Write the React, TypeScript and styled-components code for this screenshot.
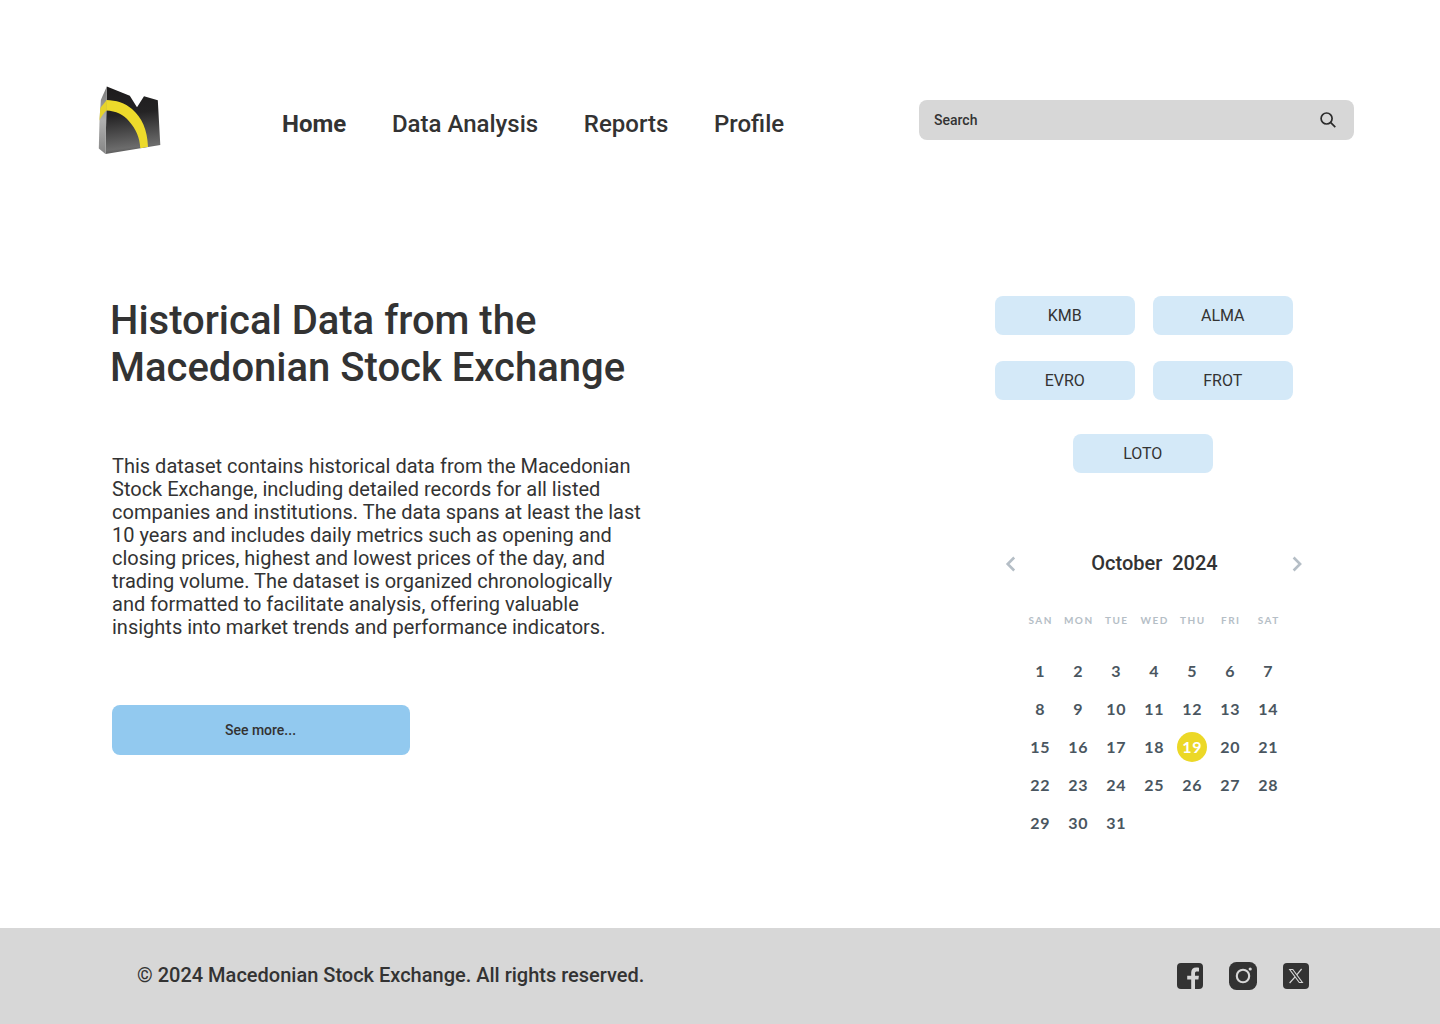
import React from "react";
import styled, { createGlobalStyle } from "styled-components";

const Global = createGlobalStyle`
  *, *::before, *::after { box-sizing: border-box; }
  body { margin: 0; background: #fff; color: #333; font-family: Roboto, "Liberation Sans", sans-serif; }
  h1, h2, p { margin: 0; }
  button { font: inherit; color: inherit; border: 0; padding: 0; cursor: pointer; }
`;

const Page = styled.div`
  width: 1440px;
  height: 1024px;
  display: flex;
  flex-direction: column;
  background: #fff;
`;

const Header = styled.header`
  height: 240px;
  padding: 82px 86px 0 94px;
  display: flex;
  align-items: flex-start;
`;

const Nav = styled.nav`
  display: flex;
  gap: 45.7px;
  margin: 28px 0 0 116px;
`;

const NavLink = styled.a<{ $active?: boolean }>`
  font-size: 24px;
  line-height: 28px;
  font-weight: ${(p) => (p.$active ? 700 : 500)};
  white-space: nowrap;
`;

const SearchBox = styled.label`
  width: 435px;
  height: 40px;
  margin: 18px 0 0 auto;
  padding: 0 18px 0 15px;
  display: flex;
  align-items: center;
  justify-content: space-between;
  border-radius: 8px;
  background: #d7d7d7;
  font-size: 14px;
  font-weight: 500;
`;

const Main = styled.main`
  flex: 1;
  display: flex;
  justify-content: space-between;
  padding: 56px 128px 0 110px;
`;

const Intro = styled.section`
  width: 560px;
  padding-top: 1px;
`;

const Title = styled.h1`
  font-size: 40px;
  line-height: 47px;
  font-weight: 500;
`;

const Description = styled.p`
  margin: 64px 0 0 2px;
  font-size: 20px;
  line-height: 23px;
  white-space: nowrap;
`;

const MoreButton = styled.button`
  display: block;
  width: 298px;
  height: 50px;
  margin: 66px 0 0 2px;
  padding-right: 1px;
  border-radius: 8px;
  background: #92c9ef;
  font-size: 14px;
  font-weight: 500;
`;

const Side = styled.aside`
  width: 317px;
`;

const Tickers = styled.div`
  display: grid;
  grid-template-columns: 140px 140px;
  column-gap: 18px;
  row-gap: 26px;
`;

const Ticker = styled.button<{ $centered?: boolean }>`
  width: 140px;
  height: 39px;
  padding-right: 0.5px;
  border-radius: 8px;
  background: #d4e9f8;
  font-size: 16px;
  ${(p) => p.$centered && "grid-column: 1 / -1; margin: 8px 0 0 78px;"}
`;

const Calendar = styled.section`
  margin-top: 76px;
`;

const CalendarHead = styled.div`
  height: 28px;
  padding: 0 9px 0 10px;
  display: flex;
  align-items: center;
  justify-content: space-between;
`;

const Month = styled.h2`
  font-size: 20px;
  line-height: 24px;
  font-weight: 500;
  white-space: pre;
  padding-left: 1px;
`;

const Arrow = styled.button`
  display: flex;
  background: none;
  padding-top: 2px;
`;

const Week = styled.div`
  display: grid;
  grid-template-columns: repeat(7, 38px);
  margin: 33px 0 0 26px;
  font-family: Lato, "Liberation Sans", sans-serif;
`;

const Weekday = styled.span`
  height: 20px;
  line-height: 20px;
  text-align: center;
  font-size: 10px;
  font-weight: 700;
  letter-spacing: 1.5px;
  margin-right: -1.5px;
  color: #b5bec6;
`;

const Days = styled(Week)`
  margin-top: 22px;
`;

const Day = styled.span<{ $selected?: boolean }>`
  width: 30px;
  height: 30px;
  margin: 4px;
  padding-left: 0.7px;
  border-radius: 50%;
  text-align: center;
  font-size: 16px;
  letter-spacing: 0.7px;
  line-height: 30px;
  font-weight: 700;
  color: ${(p) => (p.$selected ? "#fff" : "#4a5660")};
  background: ${(p) => (p.$selected ? "#ecd827" : "transparent")};
`;

const Footer = styled.footer`
  height: 96px;
  padding: 0 131px 0 137px;
  display: flex;
  align-items: center;
  justify-content: space-between;
  background: #d7d7d7;
`;

const Copyright = styled.p`
  font-size: 20px;
  line-height: 24px;
  font-weight: 500;
  padding-bottom: 2px;
`;

const Social = styled.div`
  display: flex;
  align-items: center;
  gap: 26px;
`;

const Logo = () => (
  <svg width="72" height="76" viewBox="0 0 72 76">
    <defs>
      <linearGradient id="face" x1="0.4" y1="0" x2="0.5" y2="1">
        <stop offset="0" stopColor="#1d1b1c" />
        <stop offset="0.4" stopColor="#242324" />
        <stop offset="0.9" stopColor="#6c6c6c" />
        <stop offset="1" stopColor="#505050" />
      </linearGradient>
      <linearGradient id="edge" x1="0" y1="0" x2="0" y2="1">
        <stop offset="0" stopColor="#777" />
        <stop offset="0.5" stopColor="#b0b0b0" />
        <stop offset="1" stopColor="#858585" />
      </linearGradient>
      <clipPath id="shape">
        <path d="M12.8 4.5 6.8 18 5.5 38 4.8 66.5 11.5 72 66.3 63 63.8 18.2 50 14.2 43 25.2 35.8 13.8Z" />
      </clipPath>
    </defs>
    <path d="M12.8 4.5 35.8 13.8 43 25.2 50 14.2 63.8 18.2 66.3 63 11.5 72Z" fill="url(#face)" />
    <path d="M12.8 4.5 6.8 18 5.5 38 4.8 66.5 11.5 72Z" fill="url(#edge)" />
    <g clipPath="url(#shape)" fill="#edda2b">
      <path d="M12.4 18C22 18.2 31 21 38 27 48 35.5 53.4 48 54 65L46.3 66.4C45.8 55.8 42 47 35 39.2 29.5 32.6 22 29 12.2 28.6Z" />
      <path d="M12.8 18 5.4 27 4.5 39.5C7 35.5 9.5 31.5 12.4 28.6Z" fill="#e6d32a" />
    </g>
  </svg>
);

const SearchIcon = () => (
  <svg width="16" height="16" viewBox="0 0 16 16" fill="none" stroke="#2c2c2c" strokeWidth="1.7">
    <circle cx="6.6" cy="6.5" r="5.5" />
    <path d="m10.5 10.4 4.8 4.8" />
  </svg>
);

const Chevron = ({ flip = false }: { flip?: boolean }) => (
  <svg width="12" height="16" viewBox="0 0 12 16" fill="none" stroke="#b5bec6" strokeWidth="2.6">
    <path d={flip ? "m2.6 1.5 6.5 6.5-6.5 6.5" : "M9.2 1.5 2.7 8l6.5 6.5"} />
  </svg>
);

const Facebook = () => (
  <svg width="26" height="26" viewBox="0 0 26 26">
    <path
      fill="#333"
      d="M4 0h18a4 4 0 0 1 4 4v18a4 4 0 0 1-4 4h-4v-9.6h3.4l.5-3.7H18v-2.4c0-1.3.6-1.9 2-1.9h2V4.7c-.8-.2-1.7-.3-2.8-.3-3.1 0-5 1.8-5 5.1v3.2h-4v3.7h4V26H4a4 4 0 0 1-4-4V4a4 4 0 0 1 4-4Z"
    />
  </svg>
);

const Instagram = () => (
  <svg width="28" height="28" viewBox="0 0 28 28">
    <rect width="28" height="28" rx="7.5" fill="#333" />
    <circle cx="14" cy="14" r="6.2" fill="none" stroke="#d7d7d7" strokeWidth="2.1" />
    <circle cx="21.2" cy="7" r="1.6" fill="#d7d7d7" />
  </svg>
);

const XLogo = () => (
  <svg width="26" height="26" viewBox="0 0 26 26" fill="none" stroke="#d7d7d7">
    <rect width="26" height="26" rx="4" fill="#333" stroke="none" />
    <path d="M6.7 6.5h3.1l9.6 13h-3.1Z" strokeWidth="1.1" />
    <path d="M18.6 6 13.7 11.8M12.1 13.8 6.6 20" strokeWidth="1.2" />
  </svg>
);

const lines = [
  "This dataset contains historical data from the Macedonian",
  "Stock Exchange, including detailed records for all listed",
  "companies and institutions. The data spans at least the last",
  "10 years and includes daily metrics such as opening and",
  "closing prices, highest and lowest prices of the day, and",
  "trading volume. The dataset is organized chronologically",
  "and formatted to facilitate analysis, offering valuable",
  "insights into market trends and performance indicators.",
];
const tickers = ["KMB", "ALMA", "EVRO", "FROT", "LOTO"];
const weekdays = ["SAN", "MON", "TUE", "WED", "THU", "FRI", "SAT"];
const days = Array.from({ length: 31 }, (_, i) => i + 1);

export default function App() {
  return (
    <Page>
      <Global />
      <Header>
        <Logo />
        <Nav>
          <NavLink $active>Home</NavLink>
          <NavLink>Data Analysis</NavLink>
          <NavLink>Reports</NavLink>
          <NavLink>Profile</NavLink>
        </Nav>
        <SearchBox>
          Search
          <SearchIcon />
        </SearchBox>
      </Header>
      <Main>
        <Intro>
          <Title>
            Historical Data from the
            <br />
            Macedonian Stock Exchange
          </Title>
          <Description>
            {lines.map((line) => (
              <React.Fragment key={line}>
                {line}
                <br />
              </React.Fragment>
            ))}
          </Description>
          <MoreButton>See more...</MoreButton>
        </Intro>
        <Side>
          <Tickers>
            {tickers.map((t, i) => (
              <Ticker key={t} $centered={i === 4}>
                {t}
              </Ticker>
            ))}
          </Tickers>
          <Calendar>
            <CalendarHead>
              <Arrow aria-label="Previous month">
                <Chevron />
              </Arrow>
              <Month>{"October  2024"}</Month>
              <Arrow aria-label="Next month">
                <Chevron flip />
              </Arrow>
            </CalendarHead>
            <Week>
              {weekdays.map((d) => (
                <Weekday key={d}>{d}</Weekday>
              ))}
            </Week>
            <Days>
              {days.map((d) => (
                <Day key={d} $selected={d === 19}>
                  {d}
                </Day>
              ))}
            </Days>
          </Calendar>
        </Side>
      </Main>
      <Footer>
        <Copyright>© 2024 Macedonian Stock Exchange. All rights reserved.</Copyright>
        <Social>
          <Facebook />
          <Instagram />
          <XLogo />
        </Social>
      </Footer>
    </Page>
  );
}
